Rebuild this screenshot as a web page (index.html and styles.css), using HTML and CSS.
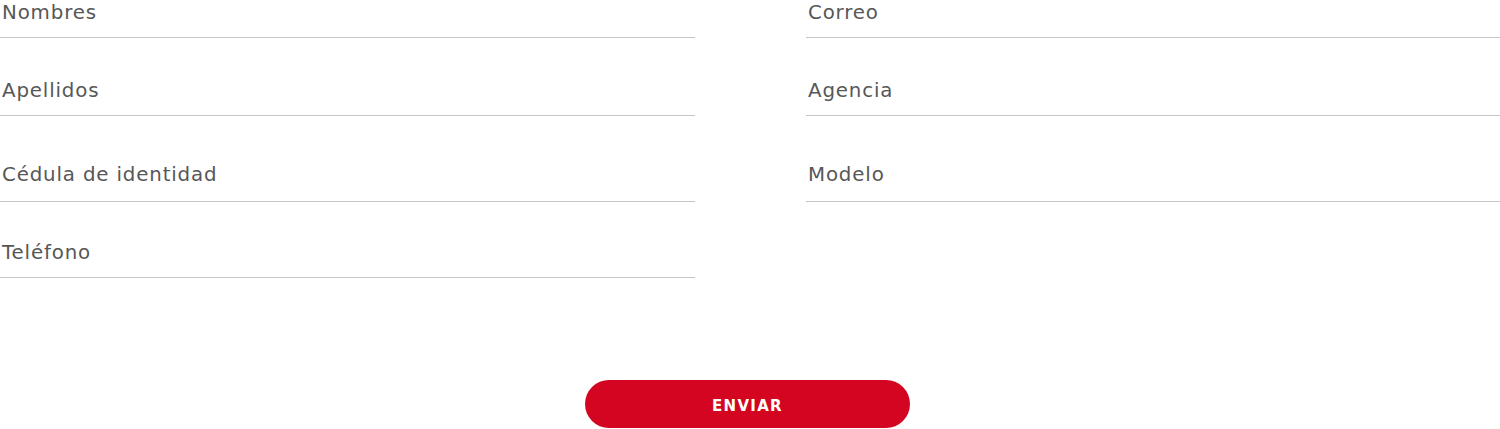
FILE: index.html
```html
<!DOCTYPE html>
<html lang="es">
<head>
<meta charset="utf-8">
<title>Formulario</title>
<link rel="stylesheet" href="styles.css">
</head>
<body>
<form class="form">
  <div class="grid">
    <label class="field"><span class="label">Nombres</span></label>
    <label class="field"><span class="label">Correo</span></label>
    <label class="field"><span class="label">Apellidos</span></label>
    <label class="field"><span class="label">Agencia</span></label>
    <label class="field field--tall"><span class="label">Cédula de identidad</span></label>
    <label class="field field--tall"><span class="label">Modelo</span></label>
    <label class="field field--short"><span class="label">Teléfono</span></label>
  </div>
  <div class="actions">
    <button type="button" class="btn">ENVIAR</button>
  </div>
</form>
</body>
</html>
```
FILE: styles.css
```css
* { box-sizing: border-box; }
html, body { margin: 0; padding: 0; background: #fff; }
body {
  font-family: "DejaVu Sans", "Open Sans", sans-serif;
  color: #555;
  overflow: hidden;
}
.grid {
  display: grid;
  grid-template-columns: 695px 694px;
  column-gap: 111px;
  row-gap: 40px;
}
.field {
  display: flex;
  align-items: flex-start;
  height: 38px;
  border-bottom: 1px solid #c6c6c6;
  padding-left: 2px;
}
.field--tall { margin-top: 6px; height: 40px; }
.field--short { margin-top: -2px; }
.label {
  font-size: 19.8px;
  line-height: 25px;
  letter-spacing: 0.85px;
  color: #575757;
}
.actions {
  display: flex;
  justify-content: center;
  padding-right: 5px;
  margin-top: 102px;
}
.btn {
  width: 325px;
  height: 48px;
  border: none;
  border-radius: 24px;
  background: #d30520;
  color: #fff;
  font-family: "DejaVu Sans", "Open Sans", sans-serif;
  font-weight: 700;
  font-size: 15px;
  letter-spacing: 1.3px;
  padding-top: 4px;
}
```
